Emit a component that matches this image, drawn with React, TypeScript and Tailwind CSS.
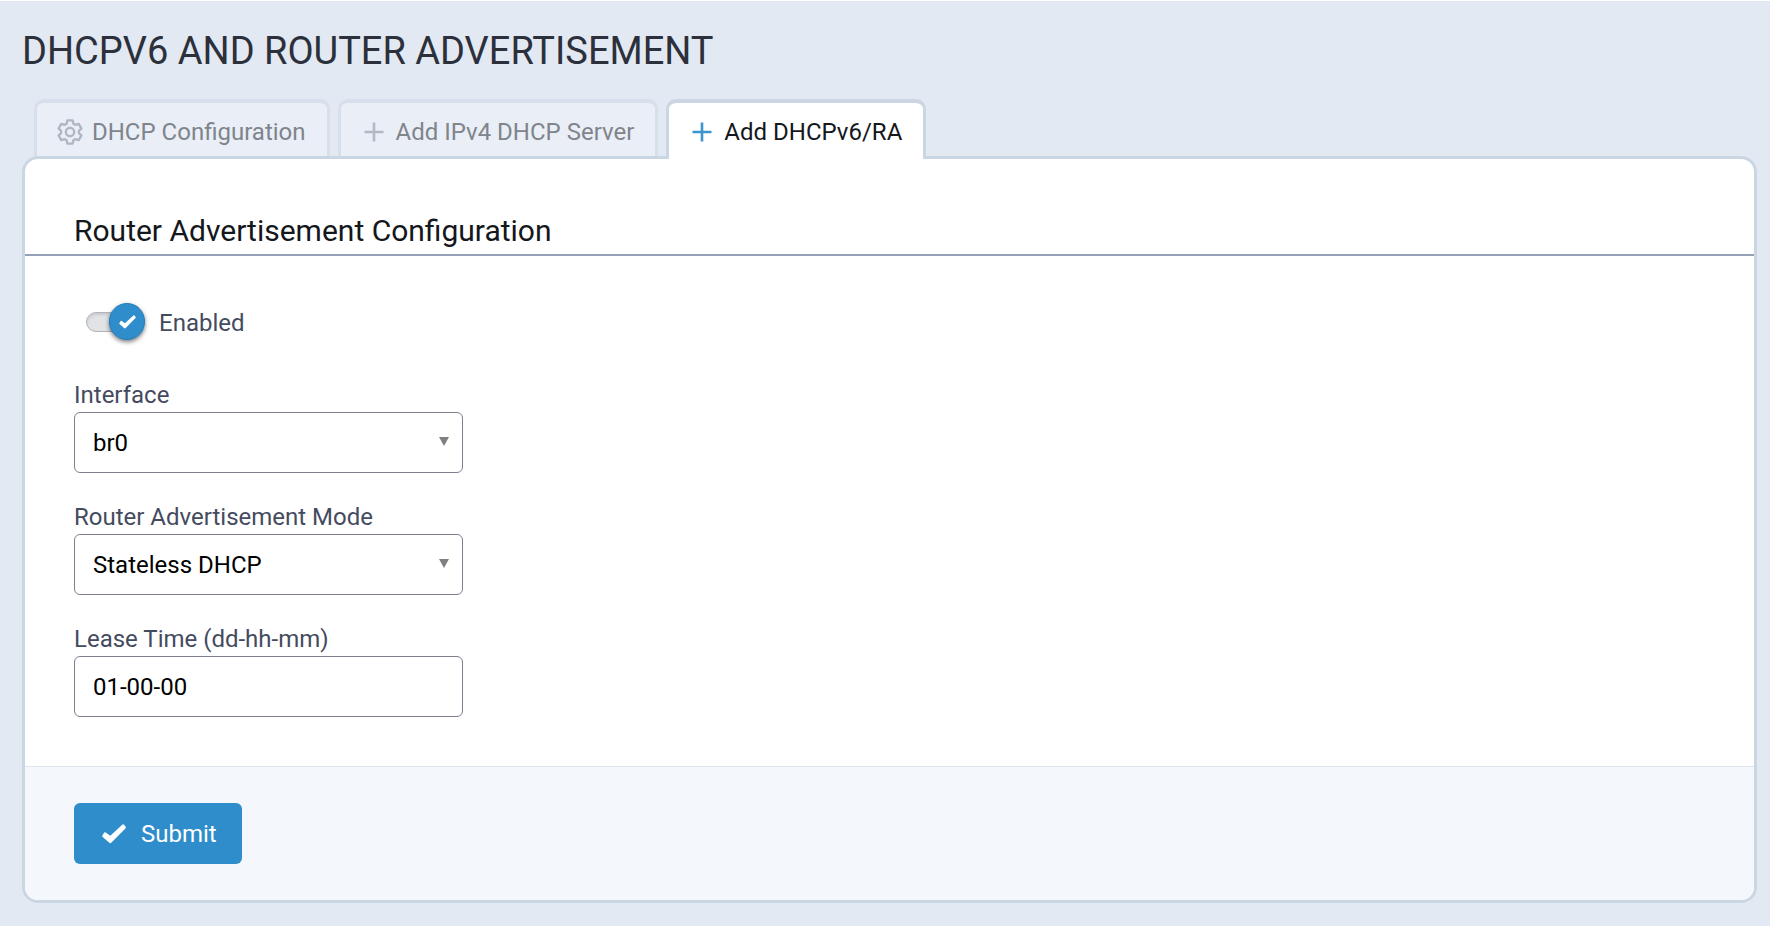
import React, { useState } from 'react';

const tabs = [
  { id: 'dhcp', label: 'DHCP Configuration', icon: 'gear' },
  { id: 'ipv4', label: 'Add IPv4 DHCP Server', icon: 'plus' },
  { id: 'ra', label: 'Add DHCPv6/RA', icon: 'plus' }
];

const GearIcon = () => (
  <svg viewBox="-13 -13 26 26" className="w-[26px] h-[26px] fill-none stroke-[#b2b6c3] stroke-[2.4]" strokeLinejoin="round">
    <path d="M-2.700-11.600H2.700L3.400-8.300 5.500-7.100 8.700-8.100 11.400-3.500 8.900-1.200V1.200L11.400 3.500 8.700 8.100 5.500 7.100 3.400 8.300 2.700 11.600H-2.700L-3.400 8.300-5.500 7.100-8.700 8.100-11.400 3.500-8.900 1.200V-1.200L-11.400-3.500-8.700-8.100-5.500-7.100-3.400-8.300z" />
    <circle r="4.200" />
  </svg>
);

const PlusIcon = ({ active }: { active: boolean }) => (
  <svg viewBox="0 0 26 26" className={active ? 'w-[26px] h-[26px] fill-[#3b94cd]' : 'w-[26px] h-[26px] fill-[#b4b8c4]'}>
    <path d="M11.700 3.500h2.600v8.200h8.200v2.600h-8.200v8.200h-2.600v-8.200H3.500v-2.600h8.200z" />
  </svg>
);

const CheckIcon = ({ className }: { className: string }) => (
  <svg viewBox="0 0 24 20" className={className}>
    <path d="M3.300 8.200 8.300 11.800 20.500.6Q21.400 0 22.100.8L23.600 2.800Q24.200 3.600 23.400 4.400L9.500 18.600Q8.200 19.700 7 18.600L.7 13Q-.1 12.200.5 11.300L2 8.800Q2.600 7.900 3.300 8.200z" />
  </svg>
);

const SelectField = ({ id, label, options }: { id: string; label: string; options: string[] }) => (
  <div>
    <label htmlFor={id} className="mb-1 block text-2xl leading-[26px] text-[#454b5e]">{label}</label>
    <div className="relative">
      <select
        id={id}
        className="block w-full h-[61px] appearance-none rounded-md border border-[#7d818d] bg-white px-[18px] text-2xl text-black"
      >
        {options.map((option) => (
          <option key={option}>{option}</option>
        ))}
      </select>
      <svg viewBox="0 0 10 9" className="absolute right-3.5 top-[25px] w-2.5 h-[9px] fill-[#808080] pointer-events-none">
        <path d="M0 0h10L5 9z" />
      </svg>
    </div>
  </div>
);

const App = () => {
  const [activeTab, setActiveTab] = useState('ra');
  const [enabled, setEnabled] = useState(true);

  return (
    <div className="min-h-screen bg-[#e2e9f3] border-t border-white px-[22px] pr-[13px] pb-[22px] font-[Roboto,sans-serif]">
      <h1 className="pt-7 text-[38px] leading-[44px] text-[#2c303b]">DHCPV6 AND ROUTER ADVERTISEMENT</h1>

      <div role="tablist" className="relative mt-[26px] flex items-end gap-2 px-3">
        {tabs.map((tab) => {
          const active = tab.id === activeTab;
          return (
            <button
              key={tab.id}
              role="tab"
              aria-selected={active}
              onClick={() => setActiveTab(tab.id)}
              className={
                active
                  ? 'relative -mb-[3px] flex h-[60px] items-center gap-[9px] rounded-t-[10px] border-x-[3px] border-t-4 border-[#cbd6e3] bg-white pt-px pl-5 pr-[21px] text-2xl text-[#14171c]'
                  : 'flex h-[57px] items-center gap-[9px] rounded-t-[10px] border-x-[3px] border-t-4 border-[#d8dfec] bg-[#eaeff7] pt-1 pl-5 pr-[21px] text-2xl text-[#80848b]'
              }
            >
              {tab.icon === 'gear' ? <GearIcon /> : <PlusIcon active={active} />}
              {tab.label}
            </button>
          );
        })}
      </div>

      <form
        onSubmit={(e) => e.preventDefault()}
        className="overflow-hidden rounded-2xl border-[3px] border-[#cbd6e3] bg-white"
      >
        <h2 className="border-b-2 border-[#94a0b8] px-[49px] pt-[53px] pb-[5px] text-[30px] leading-[37px] text-[#14171c]">
          Router Advertisement Configuration
        </h2>

        <div className="px-[49px] pt-[47px] pb-[49px]">
          <label className="ml-3 flex w-fit items-center gap-3.5 text-2xl leading-[33px] text-[#454b5e]">
            <span className="relative flex h-[37px] w-[59px] items-center">
              <input
                type="checkbox"
                checked={enabled}
                onChange={(e) => setEnabled(e.target.checked)}
                className="peer h-5 w-12 appearance-none rounded-full border border-[#b2b4bc] bg-[#e2e3e7] shadow-[inset_0_2px_3px_#c8cad0]"
              />
              <span className="absolute left-0 flex h-[37px] w-9 items-center justify-center rounded-full border border-[#2580bb] bg-[#2e8dca] shadow-[0_2px_4px_rgba(0,0,0,0.5)] peer-checked:left-[23px]">
                {enabled && <CheckIcon className="w-[17px] h-3.5 fill-white" />}
              </span>
            </span>
            <span className="pt-1">Enabled</span>
          </label>

          <div className="mt-[42px] flex w-full max-w-[389px] flex-col gap-[31px]">
            <SelectField id="interface" label="Interface" options={['br0', 'eth0']} />
            <SelectField id="mode" label="Router Advertisement Mode" options={['Stateless DHCP', 'Stateful DHCP']} />
            <div>
              <label htmlFor="lease" className="mb-1 block text-2xl leading-[26px] text-[#454b5e]">Lease Time (dd-hh-mm)</label>
              <input
                id="lease"
                type="text"
                defaultValue="01-00-00"
                className="block w-full h-[61px] rounded-md border border-[#7d818d] bg-white px-[18px] text-2xl text-black"
              />
            </div>
          </div>
        </div>

        <div className="border-t border-[#dce4ee] bg-[#f4f7fc] px-[49px] py-9">
          <button
            type="submit"
            className="flex h-[61px] items-center gap-[15px] rounded-md bg-[#2e8dca] pl-7 pr-[25px] text-2xl text-white"
          >
            <CheckIcon className="w-6 h-5 fill-white" />
            Submit
          </button>
        </div>
      </form>
    </div>
  );
};

export default App;
